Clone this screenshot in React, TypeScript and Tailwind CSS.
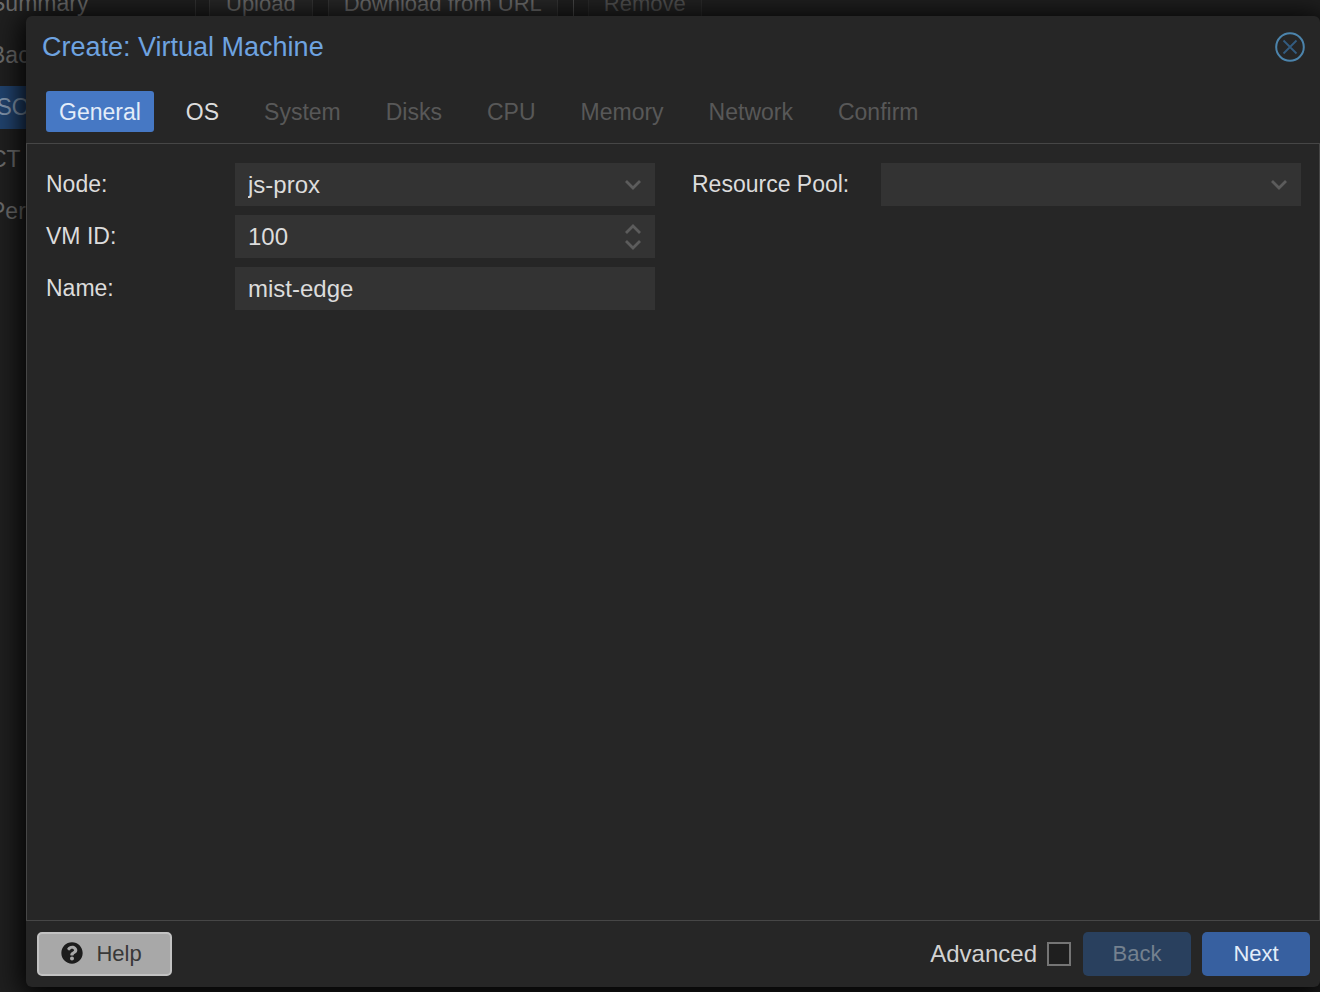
import { useState } from "react";
import type { ReactNode } from "react";
import { FaQuestionCircle } from "react-icons/fa";

const tabs = ["General", "OS", "System", "Disks", "CPU", "Memory", "Network", "Confirm"];
const storageMenu = ["Summary", "Backups", "ISO Images", "CT Templates", "Permissions"];

function Chevron({ up = false }: { up?: boolean }) {
  return (
    <svg width="16" height="10" viewBox="0 0 16 10" fill="none" stroke="currentColor" strokeWidth="2.8" aria-hidden="true">
      {up ? <path d="M1 9l7-7 7 7" /> : <path d="M1 1l7 7 7-7" />}
    </svg>
  );
}

function Field({ id, label, children }: { id: string; label: string; children: ReactNode }) {
  return (
    <div className="flex items-center">
      <label htmlFor={id} className="w-[189px] shrink-0 text-[23px] text-[#dcdcdc]">
        {label}
      </label>
      <div className="relative min-w-0 flex-1">{children}</div>
    </div>
  );
}

const inputClass =
  "block h-[43px] w-full appearance-none rounded-none bg-[#333333] px-[13px] text-[24px] text-[#dcdcdc] outline-none";

// The storage view that sits behind the modal
function StorageView() {
  return (
    <div className="absolute inset-0 overflow-hidden bg-[#1f1f1f] text-[23px] text-[#6c6c6c]">
      <div className="-mt-[18px] flex h-full">
        <nav className="-ml-[10px] flex w-[206px] shrink-0 flex-col gap-[9px] border-r border-[#333333]">
          {storageMenu.map((item) => (
            <a
              key={item}
              href="#"
              className={
                item === "ISO Images"
                  ? "flex h-[43px] items-center whitespace-nowrap bg-[#21436e] text-[#8295ac]"
                  : "flex h-[43px] items-center whitespace-nowrap"
              }
            >
              {item}
            </a>
          ))}
        </nav>
        <div className="flex h-[43px] items-center gap-[15px] pl-[13px] text-[22px]">
          <button className="h-full border border-[#353535] bg-[#272727] px-4">Upload</button>
          <button className="h-full border border-[#353535] bg-[#272727] px-[15px]">Download from URL</button>
          <span className="-mr-px h-full w-px bg-[#484848]" />
          <button disabled className="h-full border border-[#2b2b2b] bg-[#222222] px-[15px] text-[#505050]">
            Remove
          </button>
        </div>
      </div>
    </div>
  );
}

export default function App() {
  const [activeTab, setActiveTab] = useState("General");
  const [vmId, setVmId] = useState(100);
  const [name, setName] = useState("mist-edge");
  const [advanced, setAdvanced] = useState(false);

  const tabClass = (tab: string) => {
    if (tab === activeTab) return "h-[41px] rounded-[3px] bg-[#4678c4] px-[13px] pt-0.5 text-[#e3edf9]";
    if (tab === "General" || tab === "OS") return "h-[41px] px-[13px] pt-0.5 text-[#dcdcdc]";
    return "h-[41px] px-[13px] pt-0.5 text-[#585858]";
  };

  return (
    <div className="h-screen bg-white pb-px font-['Liberation_Sans',Arial,sans-serif]">
      <div className="relative flex h-full flex-col overflow-hidden pt-4 pb-[5px] pl-[26px]">
        <StorageView />

        <section
          role="dialog"
          aria-labelledby="dialog-title"
          className="relative flex min-h-0 flex-1 flex-col rounded-md bg-[#262626] shadow-[0_4px_28px_4px_#000000]"
        >
          <header className="flex h-[62px] items-center justify-between pr-[15px] pl-4">
            <h1 id="dialog-title" className="text-[27px] text-[#6ea3e0]">
              Create: Virtual Machine
            </h1>
            <button aria-label="Close" className="text-[#4c84ac]">
              <svg width="30" height="30" viewBox="0 0 30 30" fill="none" stroke="currentColor">
                <circle cx="15" cy="15" r="13.8" strokeWidth="2" />
                <path d="M8.5 8.5l13 13M21.5 8.5l-13 13" stroke="#335c80" strokeWidth="1.8" />
              </svg>
            </button>
          </header>

          <div className="flex h-[65px] gap-[19px] pt-[13px] pl-5 text-[23px]">
            {tabs.map((tab) => (
              <button
                key={tab}
                disabled={tab !== "General" && tab !== "OS"}
                onClick={() => setActiveTab(tab)}
                className={tabClass(tab)}
              >
                {tab}
              </button>
            ))}
          </div>

          <div className="flex-1 border border-[#464646] pt-[19px] pr-[18px] pl-[19px]">
            <div className="grid grid-cols-2 gap-[37px]">
              <div className="flex flex-col gap-[9px]">
                <Field id="node" label="Node:">
                  <select id="node" className={inputClass}>
                    <option>js-prox</option>
                  </select>
                  <span className="pointer-events-none absolute inset-y-0 right-[14px] flex items-center text-[#5c5c5c]">
                    <Chevron />
                  </span>
                </Field>
                <Field id="vmid" label="VM ID:">
                  <input
                    id="vmid"
                    type="number"
                    value={vmId}
                    onChange={(e) => setVmId(Number(e.target.value))}
                    className={`${inputClass} [appearance:textfield] [&::-webkit-inner-spin-button]:appearance-none`}
                  />
                  <div className="absolute inset-y-0 right-[14px] flex flex-col justify-center gap-[6px] text-[#5c5c5c]">
                    <button aria-label="Increase VM ID" onClick={() => setVmId(vmId + 1)}>
                      <Chevron up />
                    </button>
                    <button aria-label="Decrease VM ID" onClick={() => setVmId(vmId - 1)}>
                      <Chevron />
                    </button>
                  </div>
                </Field>
                <Field id="name" label="Name:">
                  <input id="name" type="text" value={name} onChange={(e) => setName(e.target.value)} className={inputClass} />
                </Field>
              </div>

              <div>
                <Field id="pool" label="Resource Pool:">
                  <select id="pool" className={inputClass}>
                    <option value=""></option>
                  </select>
                  <span className="pointer-events-none absolute inset-y-0 right-[14px] flex items-center text-[#5c5c5c]">
                    <Chevron />
                  </span>
                </Field>
              </div>
            </div>
          </div>

          <footer className="flex h-[66px] items-center justify-between pr-[10px] pl-[11px] text-[22px]">
            <button className="flex h-11 w-[135px] items-center justify-center gap-[13px] rounded-[5px] border-2 border-[#c2c2c2] bg-[#a8a8a8] pr-1.5 pb-0.5 text-[#383838]">
              <FaQuestionCircle size={22} className="text-[#1c1c1c]" />
              Help
            </button>
            <div className="flex items-center">
              <label htmlFor="advanced" className="mr-[10px] text-[24px] text-[#d2d2d2]">
                Advanced
              </label>
              <input
                id="advanced"
                type="checkbox"
                checked={advanced}
                onChange={(e) => setAdvanced(e.target.checked)}
                className="mr-3 size-6 appearance-none border-2 border-[#757575] bg-[#1f1f1f] checked:bg-[#4678c4]"
              />
              <button disabled className="mr-[11px] h-11 w-[108px] rounded-[5px] bg-[#29405e] pb-0.5 text-[#74818f]">
                Back
              </button>
              <button className="h-11 w-[108px] rounded-[5px] bg-[#3760a0] pb-0.5 text-[#e3edf9]">Next</button>
            </div>
          </footer>
        </section>
      </div>
    </div>
  );
}
